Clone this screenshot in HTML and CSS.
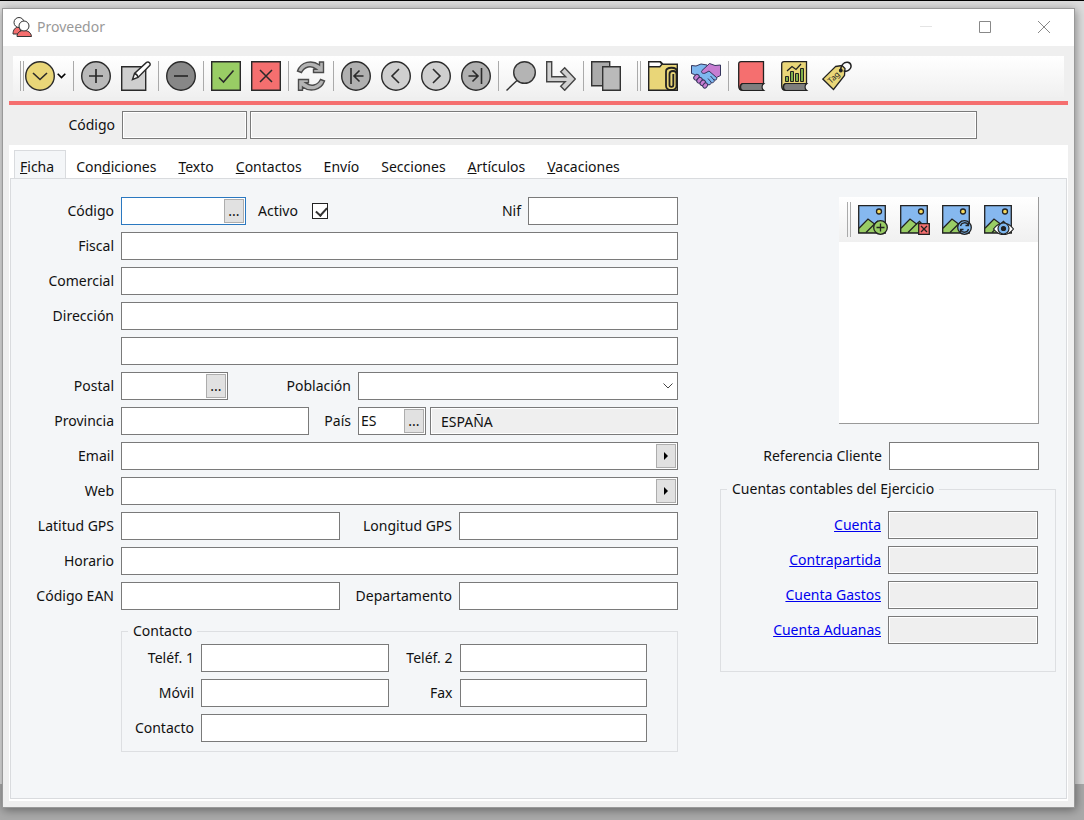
FILE: index.html
```html
<!DOCTYPE html>
<html lang="es">
<head>
<meta charset="utf-8">
<title>Proveedor</title>
<link rel="stylesheet" href="styles.css">
</head>
<body>
<main class="window">
  <header class="titlebar">
    <svg class="app-icon" viewBox="0 0 20 20" fill="#fff" stroke="#333" stroke-width="1"><path d="M1 17c0-4 2-7 6-7l3 7z" fill="#f56f6f"/><circle cx="7" cy="5.500" r="5"/><path d="M5 19.500c0-4 3-6 7-6s7 2 7.500 6z" fill="#f56f6f"/><circle cx="12" cy="9" r="5"/></svg>
    <h1 class="title">Proveedor</h1>
    <div class="window-buttons">
      <button class="window-button" aria-label="Minimizar"><svg viewBox="0 0 12 12" stroke="#e4e4e4"><path d="M0 5.500h12"/></svg></button>
      <button class="window-button" aria-label="Maximizar"><svg viewBox="0 0 12 12" fill="none" stroke="#888"><path d="M.5.5h11v11H.5z"/></svg></button>
      <button class="window-button" aria-label="Cerrar"><svg viewBox="0 0 12 12" stroke="#888"><path d="M0 0l12 12M12 0L0 12"/></svg></button>
    </div>
  </header>

  <nav class="toolbar" aria-label="Herramientas">
    <span class="grip"></span>
    <button class="tool menu-tool" aria-label="Menú">
      <svg class="icon" viewBox="0 0 30 30" fill="none" stroke="#2a2a2a"><circle cx="15" cy="15" r="14.300" fill="#e9d678" stroke-width="1.400"/><path d="M8 12l7 6.500 7-6.500" stroke-width="1.600"/></svg>
      <svg class="drop" viewBox="0 0 9 6" fill="none" stroke="#000" stroke-width="1.600"><path d="M.7.8l3.800 3.800L8.300.8"/></svg>
    </button>
    <span class="separator"></span>
    <div class="tool-group">
      <button class="tool" aria-label="Nuevo"><svg class="icon" viewBox="0 0 30 30" stroke="#2a2a2a"><circle cx="15" cy="15" r="14.300" fill="#b9b9b9" stroke-width="1.400"/><path d="M8 15h14M15 8v14" stroke-width="1.700"/></svg></button>
      <button class="tool" aria-label="Editar"><svg class="icon" viewBox="0 0 30 30" stroke="#2a2a2a" stroke-width="1.400"><path d="M.7 5.700h24v23.600H.7z" fill="#cfcfcf"/><path d="M11.500 18.500l2-6L25.500 1.400c2.300-1.200 4.600 1 3.200 3.200L17 16.500z" fill="#fff"/><path d="M13.500 12.500c1.800.4 3.200 2 3.500 4" fill="none"/></svg></button>
    </div>
    <span class="separator"></span>
    <button class="tool" aria-label="Eliminar"><svg class="icon" viewBox="0 0 30 30" stroke="#2a2a2a"><circle cx="15" cy="15" r="14.300" fill="#878787" stroke-width="1.400"/><path d="M8 15h14" stroke-width="1.700"/></svg></button>
    <span class="separator"></span>
    <div class="tool-group">
      <button class="tool" aria-label="Aceptar"><svg class="icon" viewBox="0 0 30 30" stroke="#2a2a2a"><path d="M.7.7h28.600v28.600H.7z" fill="#99cd65" stroke-width="1.400"/><path d="M8 16.500l4.500 4.500L22.500 9.500" fill="none" stroke-width="1.600"/></svg></button>
      <button class="tool" aria-label="Cancelar"><svg class="icon" viewBox="0 0 30 30" stroke="#2a2a2a"><path d="M.7.7h28.600v28.600H.7z" fill="#f56f6f" stroke-width="1.400"/><path d="M9 9l12 12M21 9L9 21" stroke-width="1.500"/></svg></button>
    </div>
    <span class="separator"></span>
    <button class="tool" aria-label="Actualizar"><svg class="icon" viewBox="0 0 30 30" fill="#b4b4b4" stroke="#4b4b4b" stroke-width="1.400"><path d="M1.500 10C5 .5 16-1.500 23.500 4V1h4v10.500h-10V8.300h3C15 3.800 8.500 5.500 5.500 11.500z"/><path d="M28.500 20C25 29.500 14 31.500 6.500 26v3.300h-4V18.500h10v3.300h-3C15 26 21.500 24.500 24.500 18.500z"/></svg></button>
    <span class="separator"></span>
    <div class="tool-group">
      <button class="tool" aria-label="Primero"><svg class="icon" viewBox="0 0 30 30" fill="none" stroke="#2a2a2a"><circle cx="15" cy="15" r="14.300" fill="#b0b0b0" stroke-width="1.400"/><path d="M10 7v16M22.500 15H13.500M18.500 9.500L13 15l5.500 5.500" stroke-width="1.600"/></svg></button>
      <button class="tool" aria-label="Anterior"><svg class="icon" viewBox="0 0 30 30" fill="none" stroke="#2a2a2a"><circle cx="15" cy="15" r="14.300" fill="#cfcfcf" stroke-width="1.400"/><path d="M18 8l-7 7 7 7" stroke-width="1.600"/></svg></button>
      <button class="tool" aria-label="Siguiente"><svg class="icon" viewBox="0 0 30 30" fill="none" stroke="#2a2a2a"><circle cx="15" cy="15" r="14.300" fill="#cfcfcf" stroke-width="1.400"/><path d="M12 8l7 7-7 7" stroke-width="1.600"/></svg></button>
      <button class="tool" aria-label="Último"><svg class="icon" viewBox="0 0 30 30" fill="none" stroke="#2a2a2a"><circle cx="15" cy="15" r="14.300" fill="#b0b0b0" stroke-width="1.400"/><path d="M20.500 7v16M7.500 15h9M11.500 9.500L17 15l-5.500 5.500" stroke-width="1.600"/></svg></button>
    </div>
    <span class="separator"></span>
    <div class="tool-group">
      <button class="tool" aria-label="Buscar"><svg class="icon" viewBox="0 0 30 30" stroke="#333" stroke-width="1.400"><path d="M.5 29.500L11 19.500"/><circle cx="18.500" cy="11.500" r="10.800" fill="#b4b4b4"/></svg></button>
      <button class="tool" aria-label="Ir a"><svg class="icon" viewBox="0 0 30 30" fill="#d0d0d0" stroke="#444" stroke-width="1.400"><path d="M.7.7h5v15h14l-5-5 4-4L29.300 18 18.700 29.300l-4-4 4.500-4.600H.7z"/></svg></button>
    </div>
    <span class="separator"></span>
    <button class="tool" aria-label="Copiar"><svg class="icon" viewBox="0 0 30 30" stroke="#333" stroke-width="1.400"><path d="M.7.7h18v24H.7z" fill="#ababab"/><path d="M11.700 5.700h17.600v23.600H11.700z" fill="#bababa"/></svg></button>
    <span class="grip second-grip"></span>
    <div class="tool-group wide">
      <button class="tool" aria-label="Adjuntos"><svg class="icon" viewBox="0 0 30 30" fill="none" stroke="#222" stroke-width="1.400"><path d="M.7.7h11.800l2.500 2.500h14.300v26H.7z" fill="#e9d678"/><path d="M.7.700h11.300l2 2.500-2.200 2.500H.7z" fill="#fff"/><path d="M29 12v-1.500c0-5-11-5-11 0v14.500c0 5.300 10.500 5.300 10.500 0V13c0-4-7-4-7 0v11c0 2.500 3.800 2.500 3.800 0V13" stroke-width="1.800"/></svg></button>
      <button class="tool" aria-label="Acuerdos"><svg class="icon" viewBox="0 0 30 30" stroke="#34345c" stroke-width="1" stroke-linejoin="round"><path d="M.5 4.500L5 5l5-2 6 1 9.500 12.500c1 2-1 3.300-2.500 2.300 1 2.200-1.300 3.700-3 2.500.5 2-1.500 3.200-3.500 2.200L7 17l-3.500-3.500-3-1z" fill="#7eb7ef"/><path d="M11 9.500l7.500-7 5.500 2 5.500-.5v10.500l-4 2L18 10l-4 2.200c-2.500.8-4.500-1-3-2.700z" fill="#c77dd1"/><g fill="#c77dd1"><rect x="3.500" y="13.500" width="4.500" height="6" rx="2.200" transform="rotate(40 6 16)"/><rect x="6.500" y="16.500" width="4.500" height="6" rx="2.200" transform="rotate(40 9 19)"/><rect x="9.500" y="19" width="4.500" height="6" rx="2.200" transform="rotate(40 12 22)"/><rect x="12.500" y="21.500" width="4" height="5.500" rx="2" transform="rotate(40 14 24)"/></g><path d="M17 17.500l3 3.500M19.500 15l3.500 4" fill="none"/></svg></button>
    </div>
    <span class="separator"></span>
    <div class="tool-group wide">
      <button class="tool" aria-label="Libro"><svg class="icon" viewBox="0 0 30 30" stroke="#222" stroke-width="1.300"><path d="M5 .7h22.500v22H6.500c-3 1-3 5.500 0 6.600C3 29.300 2.700 27 2.700 25V3C2.700 1.500 3.500.7 5 .7z" fill="#f56f6f"/><path d="M27.500 22.700H6.500c-2.500 1-2.500 5.500 0 6.600h21c-2-1.500-2-5 0-6.600z" fill="#999"/><path d="M5.500 25h20.500M5.500 27h20.500" stroke="#555" stroke-width=".8"/></svg></button>
      <button class="tool" aria-label="Informes"><svg class="icon" viewBox="0 0 30 30" stroke="#222" stroke-width="1.300"><path d="M5 .7h22.500v22H6.500c-3 1-3 5.500 0 6.600C3 29.300 2.700 27 2.700 25V3C2.700 1.500 3.500.7 5 .7z" fill="#e9d678"/><path d="M27.500 22.700H6.500c-2.500 1-2.500 5.500 0 6.600h21c-2-1.500-2-5 0-6.600z" fill="#999"/><path d="M5.500 25h20.500M5.500 27h20.500" stroke="#555" stroke-width=".8"/><path d="M6.500 15.500h3v5h-3zM11.500 10.500h3v10h-3zM16.500 12.500h3v8h-3zM21.500 7.500h3v13h-3z" fill="#7fb04a" stroke-width="1"/><path d="M8 10l5-4.500 4 3L22 3" fill="none"/></svg></button>
      <button class="tool" aria-label="Etiquetas"><svg class="icon" viewBox="0 0 30 30" stroke="#222" stroke-width="1.300"><path d="M13.500 5.500L20 4.500l3 3-.5 7-11 14L.8 18z" fill="#e9d678"/><path d="M18.500 9.500C19 4 22 1 25.500 1.300c4 .4 4.500 5 2 7.200-2 2-4.800 2-5.800 1.200" fill="none" stroke-width="1.500"/><circle cx="18.800" cy="9.500" r="1.300" fill="#222"/><text class="tag-text" transform="translate(9 23) rotate(-45)">Tag</text></svg></button>
    </div>
  </nav>
  <div class="accent"></div>

  <div class="record">
    <label class="label" for="rec-code">Código</label>
    <input class="field w-code" id="rec-code" readonly>
    <input class="field fill record-name" aria-label="Nombre" readonly>
  </div>

  <section class="tabs">
    <div class="tablist" role="tablist">
      <button class="tab active" role="tab" aria-selected="true"><u>F</u>icha</button>
      <button class="tab" role="tab">Con<u>d</u>iciones</button>
      <button class="tab" role="tab"><u>T</u>exto</button>
      <button class="tab" role="tab"><u>C</u>ontactos</button>
      <button class="tab" role="tab">Envío</button>
      <button class="tab" role="tab">Secciones</button>
      <button class="tab" role="tab"><u>A</u>rtículos</button>
      <button class="tab" role="tab"><u>V</u>acaciones</button>
    </div>
    <form class="page" role="tabpanel">
      <div class="column">
        <div class="row">
          <label class="label" for="code">Código</label>
          <span class="field combo w-code focus"><input class="inner" id="code"><button type="button" class="mini" aria-label="Buscar código">...</button></span>
          <label class="check">Activo <input class="box" type="checkbox" checked></label>
          <label class="label grow" for="nif">Nif</label>
          <input class="field w-150" id="nif">
        </div>
        <div class="row"><label class="label" for="fiscal">Fiscal</label><input class="field fill" id="fiscal"></div>
        <div class="row"><label class="label" for="comercial">Comercial</label><input class="field fill" id="comercial"></div>
        <div class="row"><label class="label" for="dir">Dirección</label><input class="field fill" id="dir"></div>
        <div class="row"><span class="label"></span><input class="field fill" aria-label="Dirección, segunda línea"></div>
        <div class="row">
          <label class="label" for="postal">Postal</label>
          <span class="field combo w-postal"><input class="inner" id="postal"><button type="button" class="mini" aria-label="Buscar postal">...</button></span>
          <label class="label grow" for="poblacion">Población</label>
          <span class="select-wrap place"><select class="field" id="poblacion"><option></option></select><svg class="caret" viewBox="0 0 10 6" fill="none" stroke="#444"><path d="M.5.5L5 5 9.500.5"/></svg></span>
        </div>
        <div class="row">
          <label class="label" for="provincia">Provincia</label>
          <input class="field fill" id="provincia">
          <label class="label short" for="pais">País</label>
          <span class="place country">
            <span class="field combo w-country"><input class="inner" id="pais" value="ES"><button type="button" class="mini" aria-label="Buscar país">...</button></span>
            <input class="field fill country-name" aria-label="Nombre del país" value="ESPAÑA" readonly>
          </span>
        </div>
        <div class="row"><label class="label" for="email">Email</label><span class="field combo fill"><input class="inner" id="email"><button type="button" class="mini" aria-label="Enviar email"><svg class="play" viewBox="0 0 4 8"><path d="M0 0l4 4-4 4z"/></svg></button></span></div>
        <div class="row"><label class="label" for="web">Web</label><span class="field combo fill"><input class="inner" id="web"><button type="button" class="mini" aria-label="Abrir web"><svg class="play" viewBox="0 0 4 8"><path d="M0 0l4 4-4 4z"/></svg></button></span></div>
        <div class="row"><label class="label" for="lat">Latitud GPS</label><input class="field fill" id="lat"><label class="label second" for="lon">Longitud GPS</label><input class="field fill" id="lon"></div>
        <div class="row"><label class="label" for="horario">Horario</label><input class="field fill" id="horario"></div>
        <div class="row"><label class="label" for="ean">Código EAN</label><input class="field fill" id="ean"><label class="label second" for="dep">Departamento</label><input class="field fill" id="dep"></div>
        <fieldset class="group contact">
          <legend class="legend">Contacto</legend>
          <div class="row"><label class="label narrow" for="tel1">Teléf. 1</label><input class="field fill" id="tel1"><label class="label narrow-second" for="tel2">Teléf. 2</label><input class="field fill" id="tel2"></div>
          <div class="row"><label class="label narrow" for="movil">Móvil</label><input class="field fill" id="movil"><label class="label narrow-second" for="fax">Fax</label><input class="field fill" id="fax"></div>
          <div class="row"><label class="label narrow" for="contacto">Contacto</label><input class="field fill" id="contacto"></div>
        </fieldset>
      </div>

      <div class="side">
        <div class="picture">
          <div class="picture-tools">
            <span class="grip tall"></span>
            <button type="button" class="tool" aria-label="Añadir imagen"><svg class="icon" viewBox="0 0 30 30"><use href="#photo"/><g fill="#99cd65" stroke="#222" stroke-width="1.300"><circle cx="22.500" cy="22.500" r="6.800"/><path d="M18.500 22.500h8M22.500 18.500v8"/></g></svg></button>
            <button type="button" class="tool" aria-label="Quitar imagen"><svg class="icon" viewBox="0 0 30 30"><use href="#photo"/><g fill="#f56f6f" stroke="#222" stroke-width="1.300"><path d="M18.700 18.700h10.600v10.600H18.700z"/><path d="M21 21l6 6M27 21l-6 6"/></g></svg></button>
            <button type="button" class="tool" aria-label="Recargar imagen"><svg class="icon" viewBox="0 0 30 30"><use href="#photo"/><g fill="#7eb7ef" stroke="#222" stroke-width="1.300"><circle cx="22.500" cy="22.500" r="6.800"/><path d="M18.500 21c1-4 6-4 7.500-1.500M26.500 17.500v3h-3M26.500 24c-1 4-6 4-7.500 1.500M18.500 27.500v-3h3" fill="none"/></g></svg></button>
            <button type="button" class="tool" aria-label="Ver imagen"><svg class="icon" viewBox="0 0 30 30"><use href="#photo"/><g stroke="#222" stroke-width="1.200"><path d="M9.500 24c6-8 14-8 20 0-6 7.500-14 7.500-20 0z" fill="#fff"/><circle cx="19.500" cy="23.500" r="5.500" fill="#7eb7ef"/><circle cx="19.500" cy="23.500" r="2" fill="#222"/></g></svg></button>
          </div>
        </div>
        <div class="row reference"><label class="label grow" for="ref">Referencia Cliente</label><input class="field w-150" id="ref"></div>
        <fieldset class="group accounts">
          <legend class="legend">Cuentas contables del Ejercicio</legend>
          <div class="row"><a class="label grow" href="#cuenta">Cuenta</a><input class="field w-150" id="cuenta" aria-label="Cuenta" readonly></div>
          <div class="row"><a class="label grow" href="#contrapartida">Contrapartida</a><input class="field w-150" id="contrapartida" aria-label="Contrapartida" readonly></div>
          <div class="row"><a class="label grow" href="#gastos">Cuenta Gastos</a><input class="field w-150" id="gastos" aria-label="Cuenta Gastos" readonly></div>
          <div class="row"><a class="label grow" href="#aduanas">Cuenta Aduanas</a><input class="field w-150" id="aduanas" aria-label="Cuenta Aduanas" readonly></div>
        </fieldset>
      </div>
    </form>
  </section>
</main>
<svg class="symbols" aria-hidden="true"><defs><g id="photo" stroke="#222" stroke-width="1.300"><path d="M.7.7h26.600v27.100H.7z" fill="#86b8ef"/><path d="M.7 23.500L10 14l6.500 5 3-2.500 7.800 8v3.300H.7z" fill="#99cd65"/><path d="M8 27.500l9-9" fill="none"/><circle cx="21" cy="6.500" r="2.500" fill="#f3d75e"/></g></defs></svg>
</body>
</html>
```
FILE: styles.css
```css
* { box-sizing: border-box; }

body {
  margin: 0;
  min-height: 100vh;
  padding: 7px 9px 12px 2px;
  border-top: 1px solid #000;
  display: flex;
  flex-direction: column;
  font-family: "Noto Sans", "Open Sans", sans-serif;
  font-size: 14px;
  line-height: 20px;
  color: #111;
  background: linear-gradient(#dcdcdc, #dcdcdc) top / 100% calc(100% - 36px) no-repeat #a9a9a9;
}

button, input, select { font: inherit; color: inherit; margin: 0; }
button { padding: 0; border: 0; background: none; }
svg { display: block; flex: none; }
.symbols { position: absolute; width: 0; height: 0; }

.window {
  flex: 1;
  display: flex;
  flex-direction: column;
  padding: 0 6px 6px;
  border: 1px solid #999;
  background: #efefef;
  box-shadow: 1px 2px 9px rgba(0, 0, 0, .4);
}

.titlebar {
  display: flex;
  align-items: center;
  height: 37px;
  margin: 0 -6px;
  padding: 0 23px 1px 9px;
  background: #fff;
}
.app-icon { width: 20px; height: 20px; }
.title { margin: 0 0 0 5px; font-size: 14px; font-weight: 400; color: #999; }
.window-buttons { display: flex; gap: 46px; margin-left: auto; }
.window-button { width: 13px; height: 12px; }
.window-button svg { width: 12px; height: 12px; }

.toolbar {
  display: flex;
  align-items: center;
  gap: 7px;
  height: 41px;
  margin: 10px 4px 0;
  padding: 0 0 1px 7px;
  background: linear-gradient(#fff, #f0f0f0);
}
.tool-group { display: flex; gap: 10px; }
.tool-group.wide { gap: 13px; }
.tool { flex: none; }
.icon { width: 30px; height: 30px; }
.menu-tool { display: flex; align-items: center; gap: 2px; margin-left: -7px; }
.drop { width: 9px; height: 6px; }
.separator { width: 1px; height: 30px; background: #aaa; }
.grip { width: 4px; height: 30px; margin-right: 1px; border: solid #aaa; border-width: 0 1px; }
.grip.second-grip { margin: 0 0 0 9px; }
.tag-text { font-size: 8px; stroke: none; fill: #222; }

.accent { height: 4px; margin-top: 4px; background: #f56f6f; }

.record { display: flex; align-items: center; margin: 6px 91px 6px 0; }
.record .label { width: 106px; margin-right: 7px; }
.record-name { margin-left: 3px; }

.label { flex: none; width: 103px; text-align: right; white-space: nowrap; }
.label.grow { flex: 1; width: auto; }
.label.short { width: 35px; }
.label.second { width: 105px; }
.label.narrow { width: 66px; }
.label.narrow-second { width: 57px; }
a.label { color: #00e; }

.field {
  flex: none;
  height: 28px;
  padding: 0 3px;
  border: 1px solid #7a7a7a;
  border-radius: 0;
  background: #fff;
  outline: 0;
}
.field:read-only:is(input) { background: #efefef; box-shadow: inset 0 0 0 1px #fff; }
.field.fill { flex: 1; min-width: 0; }
.field.focus { border-color: #2a78c0; }
.w-code { width: 125px; }
.w-postal { width: 107px; }
.w-country { width: 68px; }
.w-150 { width: 150px; }
.combo { display: flex; padding: 1px 1px 1px 2px; }
.inner { flex: 1; width: 0; min-width: 0; padding: 0; border: 0; outline: 0; background: none; }
.mini {
  display: flex;
  align-items: center;
  justify-content: center;
  width: 20px;
  border: 1px solid #adadad;
  background: #e1e1e1;
}
.play { width: 4px; height: 8px; }

.tabs { flex: 1; display: flex; flex-direction: column; padding: 5px 1px 2px; background: #fff; }
.tablist { display: flex; margin: 0 4px -1px; }
.tab { height: 28px; padding: 5px 12px 0 10px; }
.tab.active { height: 29px; padding: 4px 11px 0 5px; border: 1px solid #d9dbde; border-bottom: 0; background: #f4f6f8; }

.page {
  flex: 1;
  display: grid;
  grid-template-columns: minmax(0, 1fr) 336px;
  column-gap: 42px;
  padding: 18px 10px 46px 0;
  border: 1px solid #d9dbde;
  background: #f4f6f8;
}
.column { display: flex; flex-direction: column; gap: 7px; }
.row { display: flex; align-items: center; gap: 7px; }
.check { display: flex; align-items: center; gap: 14px; margin-left: 5px; }
.box { appearance: none; width: 16px; height: 16px; border: 1px solid #222; background: #fff; }
.box:checked::after {
  content: "";
  display: block;
  width: 5px;
  height: 9px;
  margin: 1px 0 0 5px;
  border: solid #333;
  border-width: 0 2px 2px 0;
  transform: rotate(42deg);
}
.place { width: 320px; }
.select-wrap { position: relative; }
.select-wrap .field { display: block; width: 100%; appearance: none; }
.caret { position: absolute; right: 5px; top: 11px; width: 10px; height: 6px; pointer-events: none; }
.country { display: flex; gap: 4px; }
.country-name { padding-left: 10px; }

.group { min-width: 0; margin: 0; border: 1px solid #dddfe2; }
.legend { padding: 0 5px; }
.contact { margin: 4px 0 0 110px; padding: 3px 30px 9px 6px; display: flex; flex-direction: column; gap: 7px; }

.side { display: flex; flex-direction: column; }
.picture {
  width: 200px;
  height: 227px;
  margin-left: 119px;
  border: solid #999;
  border-width: 0 1px 1px 0;
  background: #fff;
}
.picture-tools { display: flex; align-items: center; gap: 12px; height: 45px; padding-left: 8px; background: linear-gradient(#fff, #f0f0f0); }
.grip.tall { height: 35px; margin-right: -5px; }
.reference { margin: 18px 17px 0 0; }
.accounts { display: flex; flex-direction: column; gap: 7px; margin-top: 9px; padding: 12px 17px 27px 6px; }
```
